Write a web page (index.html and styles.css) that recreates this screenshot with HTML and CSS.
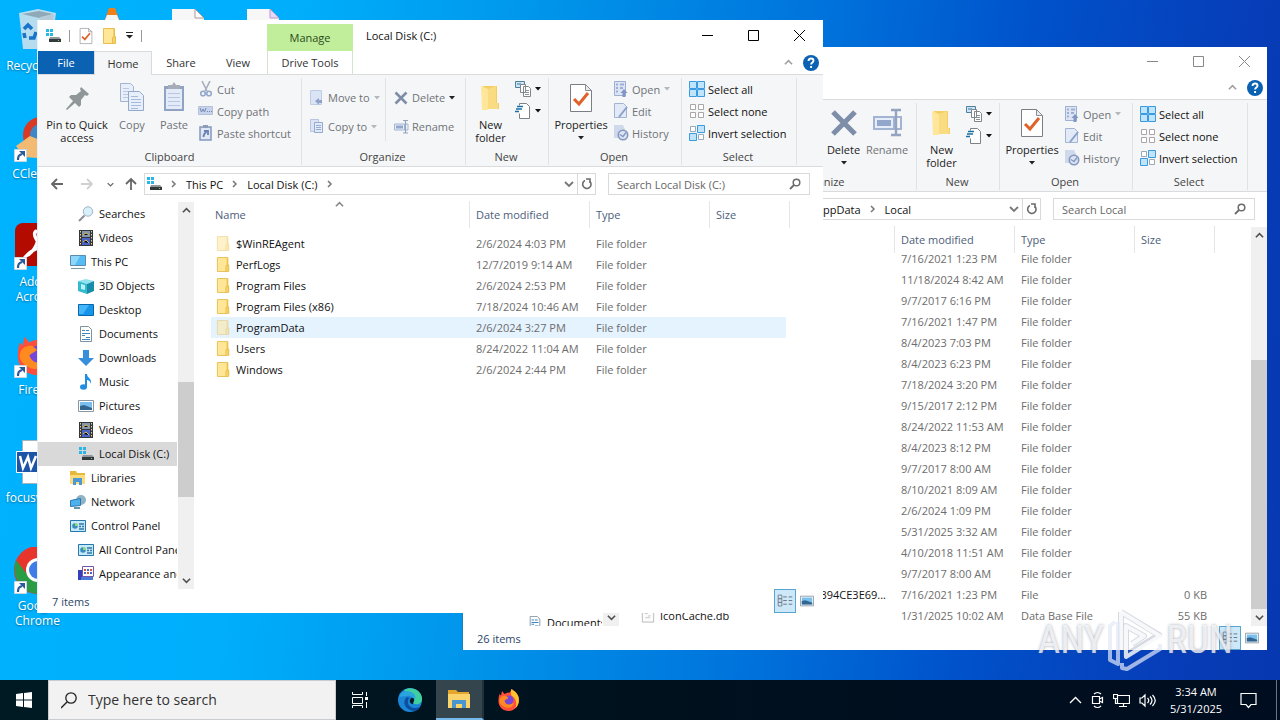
FILE: index.html
```html
<!DOCTYPE html>
<html lang="en">
<head>
<meta charset="utf-8">
<title>Local Disk (C:)</title>
<link rel="stylesheet" href="styles.css">
</head>
<body>
<svg class="defs" aria-hidden="true">
  <symbol id="i-drive" viewBox="0 0 16 16"><path fill="#29b6e8" d="M1 1h3v3H1zM5 1h3v3H5zM1 5h3v3H1zM5 5h3v3H5z"/><path fill="#8f9599" d="M5 9h9l2 2H4z"/><path fill="#33383c" d="M4 11h12v3H4z"/><path fill="#5fe05f" d="M13 12h1v1h-1z"/></symbol>
  <symbol id="i-check" viewBox="0 0 28 32"><path fill="#fff" stroke="#7b7f85" d="M3.500 2.500h15l6 6v21h-21z"/><path fill="#e9eaec" stroke="#8b8f95" d="M18.500 2.500v6h6z"/><path fill="none" stroke="#e0622b" stroke-width="3" d="M7 17l5 5 9-11"/></symbol>
  <symbol id="i-folder" viewBox="0 0 16 16"><path fill="#f5d268" d="M2 1h11v8h1v6H2z"/><path fill="#ffe797" d="M2 1h9v14H2z"/><path fill="none" stroke="#e6bd4c" d="M1.500.500h11v8h1v7h-12zM10.500 15.500v-6l2-1"/></symbol>
  <symbol id="i-bigfolder" viewBox="0 0 24 32"><path fill="#f3cf62" d="M4 4h14v17h2v6H8z"/><path fill="#ffe69a" d="M2 4l7 3v21H3z"/><path fill="#f9dc82" d="M9 7l8-3v17h2v6H9z"/></symbol>
  <symbol id="i-pin" viewBox="0 0 32 32"><path fill="#8f9799" d="M20 5l8 7-2 2-2-1-4 5 0 5-2 2-4-4-8 7-1-1 7-8-4-4 2-2 5 0 5-4-1-2z"/></symbol>
  <symbol id="i-copy" viewBox="0 0 28 32"><path fill="#e8eefa" stroke="#a3b4d2" d="M2.500 1.500h10l3 3v15h-13z"/><path stroke="#b9c7e2" d="M5 6.500h6M5 9.500h8M5 12.500h8M5 15.500h8"/><path fill="#e8eefa" stroke="#93a7ca" d="M10.500 9.500h11l4 4v15h-15z"/><path stroke="#a8badb" d="M13 14.500h7M13 17.500h10M13 20.500h10M13 23.500h10M13 26.500h7"/></symbol>
  <symbol id="i-paste" viewBox="0 0 24 32"><path fill="#91a3c3" d="M2 4h20v25H2z"/><path fill="#e4ebf8" d="M4 7h16v20H4z"/><path fill="#a7adb8" d="M6 3h4l2-3 2 3h4v4H6z"/><path stroke="#b7c6e2" d="M6 11.500h12M6 15.500h12M6 19.500h12M6 23.500h12"/></symbol>
  <symbol id="i-cut" viewBox="0 0 16 16"><path fill="none" stroke="#a5aebd" stroke-width="1.600" d="M4 0l5 10M12 0L7 10"/><circle cx="5" cy="12.500" r="2.300" fill="none" stroke="#94a7cc" stroke-width="1.600"/><circle cx="11" cy="12.500" r="2.300" fill="none" stroke="#94a7cc" stroke-width="1.600"/></symbol>
  <symbol id="i-path" viewBox="0 0 16 16"><path fill="#c7d3ea" stroke="#b3c1dd" d="M.500 3.500h14v8H.500z"/><path fill="none" stroke="#7388b3" d="M2 5l1.500 4L5 6l1.500 3L8 5M9 8.500h1M11 8.500h1M13 8.500h1"/></symbol>
  <symbol id="i-shortcut" viewBox="0 0 16 16"><path fill="#dfe7f5" stroke="#8298c0" stroke-width="1.500" d="M2 2h11v13H2z"/><path fill="#8f9db7" d="M5 0h5v3H5z"/><path fill="none" stroke="#6a82b2" stroke-width="1.800" d="M5.500 12c0-3 1-4 3-5M6 6h4v4"/></symbol>
  <symbol id="i-move" viewBox="0 0 16 16"><path fill="#dbe4f4" stroke="#c0cce3" d="M1.500.500h11v14h-11z"/><path fill="#8fa3c9" d="M6 11l4-3v2h3v3h-3v2z"/></symbol>
  <symbol id="i-copyto" viewBox="0 0 16 16"><path fill="#dbe4f4" stroke="#b7c5e0" d="M1.500.500h8v12h-8z"/><path fill="#e3eaf7" stroke="#96a9ce" d="M5.500 3.500h8v10h-8z"/><path stroke="#96a9ce" d="M7 6.500h5M7 8.500h5M7 10.500h5"/></symbol>
  <symbol id="i-x" viewBox="0 0 16 16"><path fill="none" stroke="#7e8ea8" stroke-width="2.600" d="M2.500 2.500l11 11M13.500 2.500l-11 11"/></symbol>
  <symbol id="i-rename" viewBox="0 0 16 16"><path fill="#e6edf9" stroke="#a3b4d2" d="M1.500 5h10v6h-10z"/><path fill="#93a7cc" d="M3 6.500h7v3H3z"/><path fill="none" stroke="#a3b4d2" d="M13 5h2v6h-2"/><path fill="none" stroke="#93a3c0" stroke-width="1.200" d="M10 1.500h2l.500.500.500-.500h2M12.500 2v12M10 14h5"/></symbol>
  <symbol id="i-newitem" viewBox="0 0 16 16"><path fill="#cfe5f5" stroke="#51809b" d="M.500.500h9v6h-9z"/><path stroke="#2d7faf" d="M2 3h4"/><path fill="#fff" stroke="#7f868c" d="M5.500 3.500h5v8h-5zM8.500 5.500h5l2 2v8h-7z"/><path stroke="#8a9298" d="M10 9.500h4M10 11.500h4M10 13.500h4"/></symbol>
  <symbol id="i-easy" viewBox="0 0 16 16"><path fill="#fff" stroke="#7b8288" d="M4.500 2.500v-2h7l3 3v12h-10v-5"/><path stroke="#1c6fa5" stroke-width="1.300" d="M2 3.500h6M1 6h6M0 8.500h4"/></symbol>
  <symbol id="i-open" viewBox="0 0 16 16"><path fill="#dde5f4" stroke="#9dafd2" d="M1.500.500h11v14h-11z"/><path stroke="#9dafd2" stroke-width="2" d="M3 3.500h2M3 7h2M3 10.500h2M7 3.500h4M7 7h3"/><path fill="#8196c2" d="M11 8l3.500 4h-2v4h-3v-4h-2z"/></symbol>
  <symbol id="i-edit" viewBox="0 0 16 16"><path fill="#e3eaf7" stroke="#a3b4d2" d="M1.500.500h9l3 3v11h-12z"/><path stroke="#8b9fc8" stroke-width="2" d="M14 4L6 14"/></symbol>
  <symbol id="i-history" viewBox="0 0 16 16"><path fill="#cfd9ec" d="M1 0h9l2 4v9H1z"/><circle cx="10" cy="10" r="4.700" fill="#dce4f4" stroke="#8497c0" stroke-width="1.600"/><path fill="none" stroke="#8497c0" stroke-width="1.300" d="M7 9.500l3 2 3-4"/></symbol>
  <symbol id="i-selall" viewBox="0 0 16 16"><path fill="#bfe4fb" stroke="#3b9be0" d="M.500.500h7v7h-7zM8.500.500h7v7h-7zM.500 8.500h7v7h-7zM8.500 8.500h7v7h-7z"/></symbol>
  <symbol id="i-selnone" viewBox="0 0 16 16"><path fill="#fff" stroke="#aaa6a6" d="M1.500 1.500h5v5h-5zM9.500 1.500h5v5h-5zM1.500 9.500h5v5h-5zM9.500 9.500h5v5h-5z"/></symbol>
  <symbol id="i-selinv" viewBox="0 0 16 16"><path fill="#fff" stroke="#9aa9b5" d="M1.500 1.500h5v5h-5zM9.500 9.500h5v5h-5z"/><path fill="#bfe4fb" stroke="#3b9be0" d="M8.500.500h7v7h-7zM.500 8.500h7v7h-7z"/></symbol>
  <symbol id="i-caret" viewBox="0 0 6 4"><path fill="currentColor" d="M0 0h6L3 3.500z"/></symbol>
  <symbol id="i-back" viewBox="0 0 14 14"><path fill="none" stroke="currentColor" stroke-width="1.800" d="M13 7H2M7 2L2 7l5 5"/></symbol>
  <symbol id="i-chev" viewBox="0 0 10 10"><path fill="none" stroke="currentColor" stroke-width="1.800" d="M1 3l4 4 4-4"/></symbol>
  <symbol id="i-sep" viewBox="0 0 6 8"><path fill="none" stroke="currentColor" stroke-width="1.500" d="M1 1l3 3-3 3"/></symbol>
  <symbol id="i-refresh" viewBox="0 0 12 12"><path fill="none" stroke="#6b6b6b" stroke-width="1.600" d="M9 3.500A4.200 4.200 0 1 1 4 2.500"/><path fill="none" stroke="#6b6b6b" stroke-width="1.600" d="M5 1h4v4"/></symbol>
  <symbol id="i-mag" viewBox="0 0 12 12"><circle cx="7.500" cy="4.500" r="3.300" fill="none" stroke="#6b6b6b" stroke-width="1.500"/><path stroke="#6b6b6b" stroke-width="1.800" d="M5 7l-4 4"/></symbol>
  <symbol id="i-search" viewBox="0 0 16 16"><circle cx="10" cy="5.500" r="4.700" fill="#d9f0fb" stroke="#9ab5c4"/><path stroke="#8b8f96" stroke-width="2" d="M6.500 9.500L1 15"/></symbol>
  <symbol id="i-video" viewBox="0 0 16 16"><path fill="#33363b" d="M1 0h14v16H1z"/><path stroke="#e6d690" stroke-dasharray="1.500 1.500" d="M2.500 1v14M13.500 1v14"/><path fill="#8496ab" d="M4 1h8v6H4z"/><path fill="#4b62c4" d="M4 8h8v7H4z"/><path stroke="#d5c45a" d="M5 5l3-2 3 2M5 12l3-2 3 3"/></symbol>
  <symbol id="i-pc" viewBox="0 0 16 16"><path fill="#55bcf4" stroke="#5b8cad" d="M.500 1.500h15v10H.500z"/><path fill="#8fd6fb" d="M1 2h9l-5 9H1z"/><path stroke="#7a98ac" d="M1 14.500h14"/></symbol>
  <symbol id="i-cube" viewBox="0 0 16 16"><path fill="#90e3ee" d="M0 3l8-2 8 2-7 3z"/><path fill="#35b9cf" d="M0 3l9 3v10l-9-3z"/><path fill="#188daa" d="M9 6l7-3v10l-7 3z"/><path fill="#b6f2f7" d="M3 6l4 1v5l-4-1z"/></symbol>
  <symbol id="i-desk" viewBox="0 0 16 16"><path fill="#1595ea" stroke="#0a67ab" d="M.500 2.500h15v11H.500z"/><path fill="#46b6fa" d="M1 3h10L5 12H1z"/></symbol>
  <symbol id="i-doc" viewBox="0 0 16 16"><path fill="#fff" stroke="#80909c" d="M2.500.500h8l3 3v12h-11z"/><path stroke="#3c86c4" d="M4 4.500h3M8 4.500h3M4 7.500h8M4 9.500h3M8 11.500h4M4 13.500h8" stroke-width="1.200"/></symbol>
  <symbol id="i-down" viewBox="0 0 16 16"><path fill="#378edb" d="M5 0h6v8h5l-8 8-8-8h5z"/></symbol>
  <symbol id="i-music" viewBox="0 0 16 16"><ellipse cx="5.500" cy="13" rx="3.500" ry="2.800" fill="#1e8fe0"/><path fill="#1e8fe0" d="M7 0h2c0 4 5 4 4 10-1-3-2-4-4-4v7H7z"/></symbol>
  <symbol id="i-pic" viewBox="0 0 16 16"><path fill="#fff" stroke="#8a96a0" d="M.500 2.500h15v11H.500z"/><path fill="#79c0ee" d="M2 4h12v8H2z"/><path fill="#32658f" d="M2 8l4-1 8 3v2H2z"/></symbol>
  <symbol id="i-lib" viewBox="0 0 16 16"><path fill="#e8b83d" d="M0 1h6l1 2h8v11H0z"/><path fill="#fbdc78" d="M0 5h15v9H0z"/><path fill="#4c97d8" d="M3 8h9v7H9v-3H6v3H3z"/></symbol>
  <symbol id="i-net" viewBox="0 0 16 16"><circle cx="11" cy="6" r="5" fill="#8fb2c4"/><path fill="#4fb0ee" stroke="#2d78b0" d="M.500 6.500l10-2v7l-10 1z"/><path stroke="#6994ad" stroke-width="2" d="M4 14h6"/></symbol>
  <symbol id="i-cpl" viewBox="0 0 16 16"><path fill="#c5e8fb" stroke="#2677ac" d="M.500 2.500h15v11H.500z"/><circle cx="5" cy="8" r="2.800" fill="#3b8bc0"/><path fill="#8fdc70" d="M5 8V5a3 3 0 0 1 3 3z"/><path stroke="#3077a8" stroke-width="1.500" d="M9 6h5M9 8.500h2M12 8.500h2M9 11h5"/></symbol>
  <symbol id="i-look" viewBox="0 0 16 16"><path fill="#3540b8" d="M0 4h6v10H0z"/><path fill="#fff" stroke="#7a56a6" d="M4.500.500h11v10h-11z"/><path stroke="#d25b2d" stroke-width="2" d="M6 4h2M12 4h2M9 7h2"/><path stroke="#3d68cf" stroke-width="2" d="M9 4h2M6 7h2M12 7h2"/><path fill="#4a7bd9" d="M3 11h12v3H3z"/></symbol>
  <symbol id="i-file" viewBox="0 0 16 16"><path fill="#fbfbfb" stroke="#b3b3b3" d="M1.500.500h13v15h-13z"/><path stroke="#c1c1c1" d="M4 5.500h4M8 8.500h3M5 10.500h5"/></symbol>
  <symbol id="i-details" viewBox="0 0 22 22"><path fill="none" stroke="#777d88" d="M3.500 4.500h4v4h-4zM3.500 8.500h4v4h-4zM3.500 12.500h4v4h-4z"/><path stroke="#666d75" d="M9 6.500h4M15 6.500h4M9 10.500h4M15 10.500h4M9 14.500h4M15 14.500h4"/></symbol>
  <symbol id="i-help" viewBox="0 0 16 16"><circle cx="8" cy="8" r="8" fill="#0b61b2"/><path fill="none" stroke="#fff" stroke-width="1.900" d="M5.500 6c0-3.500 5-3.200 5-.300 0 1.800-2.400 1.800-2.400 3.800M8.100 11v2"/></symbol>
  <symbol id="i-arrow" viewBox="0 0 13 13"><path fill="#fff" stroke="#c9d7e2" d="M.500.500h12v12H.500z"/><path fill="none" stroke="#2a5c9c" stroke-width="2.200" d="M4 11c0-4 1-5 4-6"/><path fill="#2a5c9c" d="M5 2h6v6z"/></symbol>
  <symbol id="i-firefox" viewBox="0 0 48 48"><path fill="#ff4f3a" d="M5 12l3 3 2-9 5 6c4-3 8-3 11-3l3-7c3 3 9 5 13 13 6 15-4 31-18 31C11 46 2 37 3 24c0-5 1-8 2-12z"/><path fill="#ffc22e" d="M29 2c3 3 9 5 13 13 4 10 1 20-5 25 4-10 0-20-7-24-3-3-3-8-1-14z"/><path fill="#ff8a1f" d="M5 26c0-8 8-12 14-10l4 4-7 3c0 9 12 12 18 6-1 9-11 13-19 9-6-3-10-7-10-12z"/><circle cx="24" cy="24" r="9" fill="#7646d8"/><path fill="#ff8a1f" d="M10 17c7-2 11 0 13 3l-8 5z"/></symbol>
</svg>

<main class="desktop">
  <ul class="shortcuts">
    <li class="shortcut"><svg class="pic" viewBox="0 0 48 48"><path fill="#d6e3ec" d="M5 6l19-4 18 4-5 36H9z" opacity=".85"/><path fill="#8fa9b8" d="M8 7l17-3 14 3-14 4z"/><path fill="#b5cbd8" d="M26 10l14-3-4 34-10 1z"/><path fill="none" stroke="#1974c9" stroke-width="3.500" d="M10 22l4-4 4 4M22 25l-2 6h-5M11 31l-1-5"/></svg><span class="cap">Recycle Bin</span></li>
    <li class="shortcut"><svg class="pic" viewBox="0 0 48 48"><circle cx="27" cy="20" r="18" fill="#d83a26"/><circle cx="27" cy="20" r="11" fill="#3f86c6"/><path fill="#f3ba74" d="M2 31l14-10 20 8v15L10 42z"/><use href="#i-arrow" y="34" width="13" height="13"/></svg><span class="cap">CCleaner</span></li>
    <li class="shortcut"><svg class="pic" viewBox="0 0 48 48"><rect x="1" width="46" height="43" rx="8" fill="#b30b00"/><path fill="none" stroke="#fff" stroke-width="3" d="M12 33c5-1 13-12 12-22-1-6-6-2-2 5 5 10 13 13 17 9-5-4-20 0-27 8z"/><use href="#i-arrow" y="34" width="13" height="13"/></svg><span class="cap">Adobe Acrobat</span></li>
    <li class="shortcut"><svg class="pic" viewBox="0 0 48 48"><use href="#i-firefox" width="48" height="46"/><use href="#i-arrow" y="34" width="13" height="13"/></svg><span class="cap">Firefox</span></li>
    <li class="shortcut"><svg class="pic" viewBox="0 0 48 48"><path fill="#fff" stroke="#a3b4c0" d="M8.500 1.500h30v43h-30z"/><path fill="#1c54a8" stroke="#fff" d="M2.500 12.500h22v21h-22z"/><path fill="none" stroke="#fff" stroke-width="2.500" d="M6 17l3 12 5-11 3 11 5-12"/></svg><span class="cap">focusworks</span></li>
    <li class="shortcut"><svg class="pic" viewBox="0 0 48 48"><circle cx="24" cy="23" r="24" fill="#e8352b"/><path fill="#2a9c46" d="M2 13c-5 16 4 32 22 34l8-16H16z"/><circle cx="24" cy="23" r="12" fill="#fff"/><circle cx="24" cy="23" r="9" fill="#3f7ce8"/><use href="#i-arrow" y="34" width="13" height="13"/></svg><span class="cap">Google Chrome</span></li>
    <li class="shortcut col2"><svg class="pic" viewBox="0 0 48 48"><path fill="#f08017" d="M20 1h6l14 38H6z"/><path fill="#f4f4f4" d="M18 8h10l4 10H14z"/></svg></li>
    <li class="shortcut col3"><svg class="pic" viewBox="0 0 48 48"><path fill="#f7f7f7" d="M8 2h23l9 9v34H8z"/><path fill="#fff" stroke="#a99" d="M31 2l9 9h-9z"/></svg></li>
    <li class="shortcut col4"><svg class="pic" viewBox="0 0 48 48"><path fill="#f7f7f7" d="M8 2h23l9 9v34H8z"/><path fill="#e5d9f4" stroke="#b9c" d="M31 2l9 9h-9z"/></svg></li>
  </ul>

  <section class="window back" aria-label="Local">
    <header class="titlebar">
      <div class="controls">
        <button aria-label="Minimize"><svg width="11" height="11"><path stroke="currentColor" d="M0 5.500h11"/></svg></button>
        <button aria-label="Maximize"><svg width="11" height="11"><path fill="none" stroke="currentColor" d="M.500.500h10v10H.500z"/></svg></button>
        <button aria-label="Close"><svg width="11" height="11"><path stroke="currentColor" d="M0 0l11 11M11 0L0 11"/></svg></button>
      </div>
    </header>
    <nav class="tabs"><span class="tabtools"><svg class="up" width="9" height="9"><use href="#i-chev"/></svg><button aria-label="Help"><svg width="16" height="16"><use href="#i-help"/></svg></button></span></nav>
    <div class="ribbon">
      <div class="group g-org-wide"><div class="tools end"><button class="big w-del"><svg width="32" height="32" viewBox="0 0 16 16"><use href="#i-x"/></svg><span>Delete</span><svg class="caret" width="6" height="4"><use href="#i-caret"/></svg></button><button class="big off w-ren"><svg width="32" height="32" viewBox="0 0 16 16"><use href="#i-rename"/></svg><span>Rename</span></button></div><h2>Organize</h2></div>
      <div class="group g-new"><div class="tools"><button class="big w-new"><svg width="24" height="32"><use href="#i-bigfolder"/></svg><span>New folder</span></button><div class="stack"><button class="small" aria-label="New item"><svg width="16" height="16"><use href="#i-newitem"/></svg><svg class="caret" width="6" height="4"><use href="#i-caret"/></svg></button><button class="small" aria-label="Easy access"><svg width="16" height="16"><use href="#i-easy"/></svg><svg class="caret" width="6" height="4"><use href="#i-caret"/></svg></button></div></div><h2>New</h2></div>
      <div class="group g-open"><div class="tools"><button class="big w-prop"><svg width="28" height="32"><use href="#i-check"/></svg><span>Properties</span><svg class="caret" width="6" height="4"><use href="#i-caret"/></svg></button><div class="stack"><button class="small off"><svg width="16" height="16"><use href="#i-open"/></svg>Open<svg class="caret" width="6" height="4"><use href="#i-caret"/></svg></button><button class="small off"><svg width="16" height="16"><use href="#i-edit"/></svg>Edit</button><button class="small off"><svg width="16" height="16"><use href="#i-history"/></svg>History</button></div></div><h2>Open</h2></div>
      <div class="group g-select"><div class="tools"><div class="stack"><button class="small"><svg width="16" height="16"><use href="#i-selall"/></svg>Select all</button><button class="small"><svg width="16" height="16"><use href="#i-selnone"/></svg>Select none</button><button class="small"><svg width="16" height="16"><use href="#i-selinv"/></svg>Invert selection</button></div></div><h2>Select</h2></div>
    </div>
    <div class="address">
      <div class="path"><span class="crumbs crumbs-deep"><button>AppData</button><svg class="sep" width="6" height="8"><use href="#i-sep"/></svg><button>Local</button></span><button class="drop" aria-label="Previous locations"><svg width="10" height="10"><use href="#i-chev"/></svg></button><button class="refresh" aria-label="Refresh"><svg width="12" height="12"><use href="#i-refresh"/></svg></button></div>
      <div class="find"><input type="text" placeholder="Search Local" aria-label="Search Local"><svg width="12" height="12"><use href="#i-mag"/></svg></div>
    </div>
    <div class="body">
      <ul class="tree tree-end"><li class="l3"><svg width="14" height="14"><use href="#i-doc"/></svg>Documents</li></ul>
      <div class="scroll scroll-end"><svg width="9" height="9"><use href="#i-chev"/></svg></div>
      <div class="list">
        <div class="cols"><button></button><button>Date modified</button><button>Type</button><button>Size</button></div>
        <div class="rows rows-scrolled">
          <table>
            <colgroup><col class="c-name"><col class="c-date"><col class="c-type"><col class="c-size"></colgroup>
            <tbody>
              <tr><td></td><td>7/16/2021 1:23 PM</td><td>File folder</td><td></td></tr>
              <tr><td></td><td>11/18/2024 8:42 AM</td><td>File folder</td><td></td></tr>
              <tr><td></td><td>9/7/2017 6:16 PM</td><td>File folder</td><td></td></tr>
              <tr><td></td><td>7/16/2021 1:47 PM</td><td>File folder</td><td></td></tr>
              <tr><td></td><td>8/4/2023 7:03 PM</td><td>File folder</td><td></td></tr>
              <tr><td></td><td>8/4/2023 6:23 PM</td><td>File folder</td><td></td></tr>
              <tr><td></td><td>7/18/2024 3:20 PM</td><td>File folder</td><td></td></tr>
              <tr><td></td><td>9/15/2017 2:12 PM</td><td>File folder</td><td></td></tr>
              <tr><td></td><td>8/24/2022 11:53 AM</td><td>File folder</td><td></td></tr>
              <tr><td></td><td>8/4/2023 8:12 PM</td><td>File folder</td><td></td></tr>
              <tr><td></td><td>9/7/2017 8:00 AM</td><td>File folder</td><td></td></tr>
              <tr><td></td><td>8/10/2021 8:09 AM</td><td>File folder</td><td></td></tr>
              <tr><td></td><td>2/6/2024 1:09 PM</td><td>File folder</td><td></td></tr>
              <tr><td></td><td>5/31/2025 3:32 AM</td><td>File folder</td><td></td></tr>
              <tr><td></td><td>4/10/2018 11:51 AM</td><td>File folder</td><td></td></tr>
              <tr><td></td><td>9/7/2017 8:00 AM</td><td>File folder</td><td></td></tr>
              <tr><td class="cut">394CE3E69...</td><td>7/16/2021 1:23 PM</td><td>File</td><td>0 KB</td></tr>
              <tr><td><svg width="14" height="15"><use href="#i-file"/></svg>IconCache.db</td><td>1/31/2025 10:02 AM</td><td>Data Base File</td><td>55 KB</td></tr>
            </tbody>
          </table>
        </div>
      </div>
      <div class="scroll"><svg class="up" width="9" height="9"><use href="#i-chev"/></svg><i class="gap-list"></i><i class="thumb thumb-list"></i><svg width="9" height="9"><use href="#i-chev"/></svg></div>
    </div>
    <footer class="status"><span>26 items</span><span class="views"><button class="on" aria-label="Details"><svg width="20" height="22"><use href="#i-details"/></svg></button><button aria-label="Large icons"><svg width="14" height="14"><use href="#i-pic"/></svg></button></span></footer>
  </section>

  <section class="window front" aria-label="Local Disk (C:)">
    <header class="titlebar">
      <div class="quick"><svg width="16" height="16"><use href="#i-drive"/></svg><i></i><button aria-label="Properties"><svg width="16" height="18"><use href="#i-check"/></svg></button><button aria-label="New folder"><svg width="16" height="16"><use href="#i-folder"/></svg></button><button aria-label="Customize"><svg width="7" height="7"><path fill="#222" d="M0 0h7v1H0zM0 3h7L3.500 6.500z"/></svg></button><i></i></div>
      <span class="manage">Manage</span>
      <h1>Local Disk (C:)</h1>
      <div class="controls">
        <button aria-label="Minimize"><svg width="11" height="11"><path stroke="currentColor" d="M0 5.500h11"/></svg></button>
        <button aria-label="Maximize"><svg width="11" height="11"><path fill="none" stroke="currentColor" d="M.500.500h10v10H.500z"/></svg></button>
        <button aria-label="Close"><svg width="11" height="11"><path stroke="currentColor" d="M0 0l11 11M11 0L0 11"/></svg></button>
      </div>
    </header>
    <nav class="tabs"><button class="file">File</button><button class="home">Home</button><button class="share">Share</button><button class="view">View</button><button class="drive">Drive Tools</button><span class="tabtools"><svg class="up" width="9" height="9"><use href="#i-chev"/></svg><button aria-label="Help"><svg width="16" height="16"><use href="#i-help"/></svg></button></span></nav>
    <div class="ribbon">
      <div class="group g-clip"><div class="tools"><button class="big w-pin"><svg width="32" height="32"><use href="#i-pin"/></svg><span>Pin to Quick access</span></button><button class="big off w-copy"><svg width="28" height="32"><use href="#i-copy"/></svg><span>Copy</span></button><button class="big off w-copy"><svg width="24" height="32"><use href="#i-paste"/></svg><span>Paste</span></button><div class="stack tight"><button class="small off"><svg width="16" height="16"><use href="#i-cut"/></svg>Cut</button><button class="small off"><svg width="16" height="16"><use href="#i-path"/></svg>Copy path</button><button class="small off"><svg width="16" height="16"><use href="#i-shortcut"/></svg>Paste shortcut</button></div></div><h2>Clipboard</h2></div>
      <div class="group g-org"><div class="tools"><div class="stack tall ruled"><button class="small off"><svg width="16" height="16"><use href="#i-move"/></svg>Move to<svg class="caret" width="6" height="4"><use href="#i-caret"/></svg></button><button class="small off"><svg width="16" height="16"><use href="#i-copyto"/></svg>Copy to<svg class="caret" width="6" height="4"><use href="#i-caret"/></svg></button></div><div class="stack tall"><button class="small off"><svg width="16" height="16"><use href="#i-x"/></svg>Delete<svg class="caret dark" width="6" height="4"><use href="#i-caret"/></svg></button><button class="small off"><svg width="16" height="16"><use href="#i-rename"/></svg>Rename</button></div></div><h2>Organize</h2></div>
      <div class="group g-new"><div class="tools"><button class="big w-new"><svg width="24" height="32"><use href="#i-bigfolder"/></svg><span>New folder</span></button><div class="stack"><button class="small" aria-label="New item"><svg width="16" height="16"><use href="#i-newitem"/></svg><svg class="caret" width="6" height="4"><use href="#i-caret"/></svg></button><button class="small" aria-label="Easy access"><svg width="16" height="16"><use href="#i-easy"/></svg><svg class="caret" width="6" height="4"><use href="#i-caret"/></svg></button></div></div><h2>New</h2></div>
      <div class="group g-open"><div class="tools"><button class="big w-prop"><svg width="28" height="32"><use href="#i-check"/></svg><span>Properties</span><svg class="caret" width="6" height="4"><use href="#i-caret"/></svg></button><div class="stack"><button class="small off"><svg width="16" height="16"><use href="#i-open"/></svg>Open<svg class="caret" width="6" height="4"><use href="#i-caret"/></svg></button><button class="small off"><svg width="16" height="16"><use href="#i-edit"/></svg>Edit</button><button class="small off"><svg width="16" height="16"><use href="#i-history"/></svg>History</button></div></div><h2>Open</h2></div>
      <div class="group g-select"><div class="tools"><div class="stack"><button class="small"><svg width="16" height="16"><use href="#i-selall"/></svg>Select all</button><button class="small"><svg width="16" height="16"><use href="#i-selnone"/></svg>Select none</button><button class="small"><svg width="16" height="16"><use href="#i-selinv"/></svg>Invert selection</button></div></div><h2>Select</h2></div>
    </div>
    <div class="address">
      <div class="moves"><button aria-label="Back"><svg width="14" height="14"><use href="#i-back"/></svg></button><button class="faint" aria-label="Forward"><svg class="flip" width="14" height="14"><use href="#i-back"/></svg></button><button class="recent" aria-label="Recent"><svg width="7" height="7"><use href="#i-chev"/></svg></button><button class="parent" aria-label="Up"><svg class="turn" width="14" height="14"><use href="#i-back"/></svg></button></div>
      <div class="path"><span class="crumbs"><svg width="16" height="16"><use href="#i-drive"/></svg><svg class="sep" width="6" height="8"><use href="#i-sep"/></svg><button>This PC</button><svg class="sep" width="6" height="8"><use href="#i-sep"/></svg><button>Local Disk (C:)</button><svg class="sep" width="6" height="8"><use href="#i-sep"/></svg></span><button class="drop" aria-label="Previous locations"><svg width="10" height="10"><use href="#i-chev"/></svg></button><button class="refresh" aria-label="Refresh"><svg width="12" height="12"><use href="#i-refresh"/></svg></button></div>
      <div class="find"><input type="text" placeholder="Search Local Disk (C:)" aria-label="Search Local Disk (C:)"><svg width="12" height="12"><use href="#i-mag"/></svg></div>
    </div>
    <div class="body">
      <ul class="tree">
        <li><svg width="16" height="16"><use href="#i-search"/></svg>Searches</li>
        <li><svg width="16" height="16"><use href="#i-video"/></svg>Videos</li>
        <li class="l1"><svg width="16" height="16"><use href="#i-pc"/></svg>This PC</li>
        <li><svg width="16" height="16"><use href="#i-cube"/></svg>3D Objects</li>
        <li><svg width="16" height="16"><use href="#i-desk"/></svg>Desktop</li>
        <li><svg width="16" height="16"><use href="#i-doc"/></svg>Documents</li>
        <li><svg width="16" height="16"><use href="#i-down"/></svg>Downloads</li>
        <li><svg width="16" height="16"><use href="#i-music"/></svg>Music</li>
        <li><svg width="16" height="16"><use href="#i-pic"/></svg>Pictures</li>
        <li><svg width="16" height="16"><use href="#i-video"/></svg>Videos</li>
        <li class="current"><svg width="16" height="16"><use href="#i-drive"/></svg>Local Disk (C:)</li>
        <li class="l1"><svg width="16" height="16"><use href="#i-lib"/></svg>Libraries</li>
        <li class="l1"><svg width="16" height="16"><use href="#i-net"/></svg>Network</li>
        <li class="l1"><svg width="16" height="16"><use href="#i-cpl"/></svg>Control Panel</li>
        <li><svg width="16" height="16"><use href="#i-cpl"/></svg>All Control Panel</li>
        <li><svg width="16" height="16"><use href="#i-look"/></svg>Appearance and</li>
      </ul>
      <div class="scroll"><svg class="up" width="9" height="9"><use href="#i-chev"/></svg><i class="gap-tree"></i><i class="thumb thumb-tree"></i><i class="rest-tree"></i><svg width="9" height="9"><use href="#i-chev"/></svg></div>
      <div class="list">
        <div class="cols"><button>Name<svg class="sort up" width="9" height="9"><use href="#i-chev"/></svg></button><button>Date modified</button><button>Type</button><button>Size</button></div>
        <div class="rows">
          <table>
            <colgroup><col class="c-name"><col class="c-date"><col class="c-type"><col class="c-size"></colgroup>
            <tbody>
              <tr class="dim"><td><svg width="15" height="15"><use href="#i-folder"/></svg>$WinREAgent</td><td>2/6/2024 4:03 PM</td><td>File folder</td><td></td></tr>
              <tr><td><svg width="15" height="15"><use href="#i-folder"/></svg>PerfLogs</td><td>12/7/2019 9:14 AM</td><td>File folder</td><td></td></tr>
              <tr><td><svg width="15" height="15"><use href="#i-folder"/></svg>Program Files</td><td>2/6/2024 2:53 PM</td><td>File folder</td><td></td></tr>
              <tr><td><svg width="15" height="15"><use href="#i-folder"/></svg>Program Files (x86)</td><td>7/18/2024 10:46 AM</td><td>File folder</td><td></td></tr>
              <tr class="dim hot"><td><svg width="15" height="15"><use href="#i-folder"/></svg>ProgramData</td><td>2/6/2024 3:27 PM</td><td>File folder</td><td></td></tr>
              <tr><td><svg width="15" height="15"><use href="#i-folder"/></svg>Users</td><td>8/24/2022 11:04 AM</td><td>File folder</td><td></td></tr>
              <tr><td><svg width="15" height="15"><use href="#i-folder"/></svg>Windows</td><td>2/6/2024 2:44 PM</td><td>File folder</td><td></td></tr>
            </tbody>
          </table>
        </div>
      </div>
    </div>
    <footer class="status"><span>7 items</span><span class="views"><button class="on" aria-label="Details"><svg width="20" height="22"><use href="#i-details"/></svg></button><button aria-label="Large icons"><svg width="14" height="14"><use href="#i-pic"/></svg></button></span></footer>
  </section>

  <div class="watermark"><span>ANY</span><svg width="58" height="64" viewBox="0 0 58 64"><g fill="none" stroke-linejoin="round"><path stroke="rgba(120,130,160,.3)" stroke-width="6" d="M15 4l38 23-33 20V18l18 10-12 8M15 4v38"/><path stroke="rgba(255,255,255,.8)" stroke-width="4" d="M15 42V4l39 24-34 21V18l18 10-12 8"/><path stroke="rgba(225,232,248,.7)" stroke-width="4" d="M9 14l-5 4v34l8 4V14M16 55v5l5 1 33-20v-5"/></g></svg><span>RUN</span></div>
</main>

<footer class="taskbar">
  <button class="start" aria-label="Start"><svg width="16" height="16"><path fill="#fff" d="M0 2l7-1v6.500H0zM8 1l8-1v7.500H8zM0 8.500h7V15l-7-1zM8 8.500h8V16l-8-1z"/></svg></button>
  <label class="search"><svg width="16" height="17" viewBox="0 0 16 17"><circle cx="10" cy="6" r="5.200" fill="none" stroke="#222" stroke-width="1.300"/><path stroke="#222" stroke-width="1.500" d="M6 10l-6 6"/></svg><input type="text" placeholder="Type here to search" aria-label="Type here to search"></label>
  <button class="tb" aria-label="Task View"><svg width="17" height="16"><path fill="none" stroke="#fff" d="M.500 0v2.500h10V0M.500 5.500h10v6H.500zM.500 16v-2.500h10V16M14.500 0v4M14.500 10v6"/><path fill="#fff" d="M13 5h3v3h-3z"/></svg></button>
  <button class="tb edge" aria-label="Edge"><svg width="24" height="24" viewBox="0 0 24 24"><circle cx="12" cy="12" r="12" fill="#1a86d8"/><path fill="#3fcf9f" d="M6 2c9-5 19 2 18 10-1 5-6 5-9 3 3-3 1-8-4-8z"/><path fill="#2aa6dd" d="M1 9c2-6 9-8 14-4 3 2 3 6 0 9 1-4-2-7-6-6-3 0-6 1-8 1z"/><path fill="#0c4f9d" d="M9 9c-6 5-1 14 8 14 3-1 4-2 5-4-7 3-13-1-12-6 0-2 1-3 2-3z"/><path fill="#031823" d="M12 12c1-3 4-3 4 0 0 2-1 2-1 4-2 0-4-2-3-4z"/></svg></button>
  <button class="tb active" aria-label="File Explorer"><svg width="22" height="20" viewBox="0 0 22 20"><path fill="#e5a52c" d="M0 1h8l2 2h11v6H0z"/><path fill="#fbd36b" d="M0 5h22v14H0z"/><path fill="#4a96cf" d="M4 11h14v8h-4v-4H8v4H4z"/></svg></button>
  <button class="tb fx" aria-label="Firefox"><svg width="24" height="24"><use href="#i-firefox"/></svg></button>
  <div class="tray">
    <button aria-label="Show hidden icons"><svg width="13" height="8"><path fill="none" stroke="#fff" stroke-width="1.300" d="M1 7l5.500-5.500L12 7"/></svg></button>
    <button aria-label="Meet Now"><svg width="13" height="18"><path fill="none" stroke="#fff" stroke-width="1.200" d="M1.500 5.500h7v7h-7zM8.500 8l3-1.500v5L8.500 10M3 3c2-2 5-2 7 0M3 15c2 2 5 2 7 0"/></svg></button>
    <button aria-label="Network"><svg width="17" height="15"><path fill="none" stroke="#fff" stroke-width="1.200" d="M5 2.500h11.500v8H4.500V6M.500 1.500h4v4h-4zM2.500 5.500v5h2M10.500 10.500v3M6 13.500h8"/></svg></button>
    <button aria-label="Volume"><svg width="18" height="15"><path fill="none" stroke="#fff" stroke-width="1.200" d="M1 5h2l3-3v11l-3-3H1zM8.500 5c1.500 1.500 1.500 3.500 0 5M11 3.500c2.500 2.500 2.500 5.500 0 8M13.500 2c3.500 3.500 3.500 7.500 0 11"/></svg></button>
    <time>3:34 AM<br>5/31/2025</time>
    <button class="notes" aria-label="Notifications"><svg width="17" height="17"><path fill="none" stroke="#fff" stroke-width="1.200" d="M1 1.500h15v11h-5l-2.500 3-2.500-3H1z"/></svg></button>
    <i class="peek"></i>
  </div>
</footer>
</body>
</html>
```

FILE: styles.css
```css
* { box-sizing: border-box; }
body {
  margin: 0;
  min-height: 100vh;
  display: flex;
  flex-direction: column;
  overflow: hidden;
  font: 11px/15px "Open Sans", "Noto Sans", sans-serif;
  color: #111;
}
button, input { font: inherit; color: inherit; background: none; border: 0; padding: 0; margin: 0; }
ul { list-style: none; margin: 0; padding: 0; }
h1, h2 { margin: 0; font-size: inherit; font-weight: 400; }
svg { display: block; flex: none; }
.defs { position: absolute; width: 0; height: 0; }
.up { transform: rotate(180deg); }
.flip { transform: rotate(180deg); }
.turn { transform: rotate(90deg); }

/* Desktop */
.desktop {
  flex: 1;
  position: relative;
  overflow: hidden;
  background: linear-gradient(97deg, #00b3ff 0%, #00aefc 22%, #0098ec 38%, #0074dc 60%, #0052cb 76%, #073db8 92%, #0638b0 100%);
}
.shortcuts { display: grid; grid-template-columns: repeat(4, 75px); grid-auto-rows: 108px; padding-top: 7px; }
.shortcut { grid-column: 1; display: flex; flex-direction: column; align-items: center; gap: 3px; }
.shortcut.col2 { grid-column: 2; grid-row: 1; }
.shortcut.col3 { grid-column: 3; grid-row: 1; }
.shortcut.col4 { grid-column: 4; grid-row: 1; }
.pic { width: 48px; height: 48px; }
.cap { width: 66px; color: #fff; font-size: 12px; text-align: center; text-shadow: 0 1px 2px #0006; }

/* Windows */
.window { position: absolute; display: flex; flex-direction: column; background: #fff; border-left: 1px solid #e4f1fa; }
.front { top: 20px; left: 37px; right: 457px; bottom: 67px; }
.back { top: 47px; left: 462px; right: 13px; bottom: 30px; border-color: #1b7fb8; }
.titlebar { height: 31px; display: flex; align-items: stretch; }
.back .titlebar { height: 29px; }
.quick { width: 229px; display: flex; align-items: center; gap: 8px; padding-left: 7px; }
.quick i { width: 1px; height: 12px; background: #999; }
.quick button { display: flex; }
.manage { width: 86px; margin-top: 4px; line-height: 27px; text-align: center; background: #c0ee9a; color: #2c4a20; }
.titlebar h1 { padding-left: 13px; line-height: 31px; }
.controls { margin-left: auto; display: flex; }
.controls button { width: 46px; display: grid; place-items: center; color: #000; }
.back .controls button { color: #888; }
.front .controls { margin-right: 1px; }

.tabs { height: 24px; display: flex; border-bottom: 1px solid #dadbdc; color: #333; }
.file { width: 56px; background: #0b61b2; color: #fff; }
.home { width: 58px; background: #f5f6f7; border: 1px solid #dadbdc; border-bottom: 0; margin-bottom: -1px; }
.share { width: 58px; }
.view { width: 56px; }
.drive { width: 86px; margin-left: 1px; border: solid #d5e3cc; border-width: 0 1px; }
.tabtools { margin-left: auto; display: flex; align-items: center; gap: 10px; padding-right: 4px; color: #a0a0a0; }

.ribbon { height: 92px; display: flex; padding: 3px 0 1px; background: #f5f6f7; border-bottom: 1px solid #dadbdc; }
.back .ribbon { justify-content: flex-end; padding-right: 19px; }
.group { flex: none; display: flex; flex-direction: column; border-right: 1px solid #e0e2e4; }
.group h2 { text-align: center; line-height: 16px; color: #444; }
.tools { flex: 1; display: flex; align-items: flex-start; }
.end { justify-content: flex-end; }
.g-clip { width: 264px; padding-left: 5px; }
.g-clip h2 { padding-right: 5px; }
.g-org { width: 164px; padding-left: 6px; }
.g-org h2 { padding-right: 8px; }
.g-org-wide { width: 190px; }
.g-org-wide .tools { padding-right: 6px; }
.g-new { width: 83px; padding-left: 4px; }
.g-new h2 { padding-right: 6px; }
.g-open { width: 133px; padding-left: 4px; }
.g-open h2 { padding-right: 6px; }
.g-select { width: 115px; padding-left: 3px; }
.g-select h2 { padding-right: 5px; }
.big { display: flex; flex-direction: column; align-items: center; padding-top: 4px; line-height: 13px; color: #222; }
.big span { margin-top: 4px; }
.big .caret { margin-top: 5px; }
.w-pin { width: 68px; }
.w-copy { width: 42px; }
.w-new { width: 41px; }
.w-prop { width: 56px; }
.w-del { width: 41px; }
.w-ren { width: 46px; }
.off { color: #6f7378; }
.stack { display: flex; flex-direction: column; padding-left: 4px; }
.tight { padding-left: 3px; }
.tall { padding: 5px 0 0 7px; }
.ruled { width: 78px; padding-left: 1px; border-right: 1px solid #e0e2e4; }
.small { height: 22px; display: flex; align-items: center; gap: 3px; white-space: nowrap; }
.tall .small { height: 29px; }
.small .caret { margin-left: 1px; }
.small.off .caret { color: #b4b8bd; }
.small.off .dark { color: #222; }

.address { height: 34px; display: flex; align-items: center; padding-right: 13px; }
.back .address { padding-right: 12px; }
.moves { width: 106px; display: flex; align-items: center; padding-left: 12px; color: #666; }
.moves button { display: flex; margin-right: 16px; }
.moves .faint { color: #d0d0d0; margin-right: 13px; }
.moves .recent { margin-right: 10px; }
.moves .parent { margin-right: 0; }
.path { flex: 1; height: 22px; display: flex; border: 1px solid #d9d9d9; }
.crumbs { flex: 1; display: flex; align-items: center; gap: 9px; padding-left: 1px; }
.crumbs-deep { padding-left: 352px; }
.crumbs button { line-height: 19px; }
.sep { color: #777; }
.drop { width: 16px; display: grid; place-items: center; color: #777; }
.refresh { width: 18px; display: grid; place-items: center; border-left: 1px solid #d9d9d9; }
.find { width: 202px; height: 22px; margin-left: 12px; display: flex; align-items: center; padding: 0 8px; border: 1px solid #d9d9d9; color: #666; }
.find input { flex: 1; min-width: 0; outline: 0; }
input::placeholder { color: inherit; opacity: 1; }

.body { flex: 1; min-height: 0; display: flex; }
.tree { width: 139px; padding-top: 1px; overflow: hidden; }
.tree li { height: 24px; display: flex; align-items: center; gap: 5px; padding: 0 0 1px 40px; white-space: nowrap; }
.tree .l1 { padding-left: 32px; }
.tree .l3 { padding-left: 65px; }
.tree .current { background: #d9d9d9; }
.tree-end { display: flex; flex-direction: column; justify-content: flex-end; }
.tree-end li { flex: none; margin-bottom: -9px; }
.scroll { width: 16px; margin: 1px 0 0 1px; display: flex; flex-direction: column; align-items: center; background: #f0f0f0; color: #505050; }
.scroll svg { margin: 4px 0; }
.scroll-end { justify-content: flex-end; }
.thumb { width: 16px; background: #cdcdcd; }
.gap-tree { flex: 163; }
.thumb-tree { flex: 114; }
.rest-tree { flex: 75; }
.gap-list { flex: 117; }
.thumb-list { flex: 250; }
.list { flex: 1; min-width: 0; display: flex; flex-direction: column; padding-left: 17px; overflow: hidden; }
.cols { flex: none; height: 27px; display: grid; grid-template-columns: 259px 120px 120px 80px; color: #4c607a; }
.cols button { position: relative; text-align: left; padding-left: 6px; border-right: 1px solid #e5e5e5; }
.cols button:first-child { padding-left: 4px; }
.sort { position: absolute; top: -1px; left: 124px; color: #888; }
.rows { flex: 1; min-height: 0; overflow: hidden; padding-top: 5px; }
.rows-scrolled { padding-top: 0; }
.rows-scrolled table { margin-top: -5px; }
table { table-layout: fixed; width: 575px; border-collapse: collapse; color: #6d6d6d; }
.c-name { width: 259px; }
.c-date, .c-type { width: 120px; }
.c-size { width: 76px; }
td { height: 21px; padding: 0 0 0 6px; white-space: nowrap; }
td:first-child { padding-left: 5px; color: #111; }
td:last-child { padding-right: 4px; text-align: right; }
td svg { display: inline-block; vertical-align: top; margin-right: 5px; }
td.cut { text-align: right; padding-right: 9px; }
.dim svg { opacity: .5; }
.hot { background: #e5f3ff; }

.status { height: 24px; display: flex; justify-content: space-between; align-items: center; padding: 0 9px 0 14px; color: #2b4468; }
.back .status { padding-right: 8px; }
.views { display: flex; align-items: center; gap: 4px; }
.views button { display: flex; }
.views .on { background: #cce8f9; border: 1px solid #5aa5cf; height: 24px; align-items: center; }

.watermark { position: absolute; right: 47px; bottom: 8px; display: flex; align-items: center; gap: 2px; font: 39px/40px "Liberation Sans Narrow", "Roboto Condensed", Roboto, sans-serif; color: rgba(255, 255, 255, .75); text-shadow: 0 0 3px rgba(70, 80, 110, .5); }

/* Taskbar */
.taskbar { height: 40px; display: flex; align-items: stretch; background: linear-gradient(90deg, #001a24, #00111e 50%, #000d20); color: #fff; font-size: 12px; }
.taskbar button { display: grid; place-items: center; }
.start { width: 48px; }
.search { width: 288px; display: flex; align-items: center; gap: 11px; padding-left: 12px; background: #f2f2f2; border: 1px solid #c9cdd0; color: #333; font-size: 14px; line-height: 20px; }
.search input { flex: 1; min-width: 0; outline: 0; }
.tb { width: 48px; }
.edge { width: 52px; }
.tb.active { background: #35454d; border-bottom: 2px solid #76b9ed; border-right: 2px solid #22323b; }
.fx { width: 50px; }
.tray { margin-left: auto; display: flex; align-items: center; gap: 9px; }
.tray time { width: 60px; text-align: center; font-size: 11px; line-height: 17px; }
.notes { width: 26px; }
.peek { width: 1px; align-self: stretch; margin: 0 3px 0 6px; background: #6b7480; }
```
